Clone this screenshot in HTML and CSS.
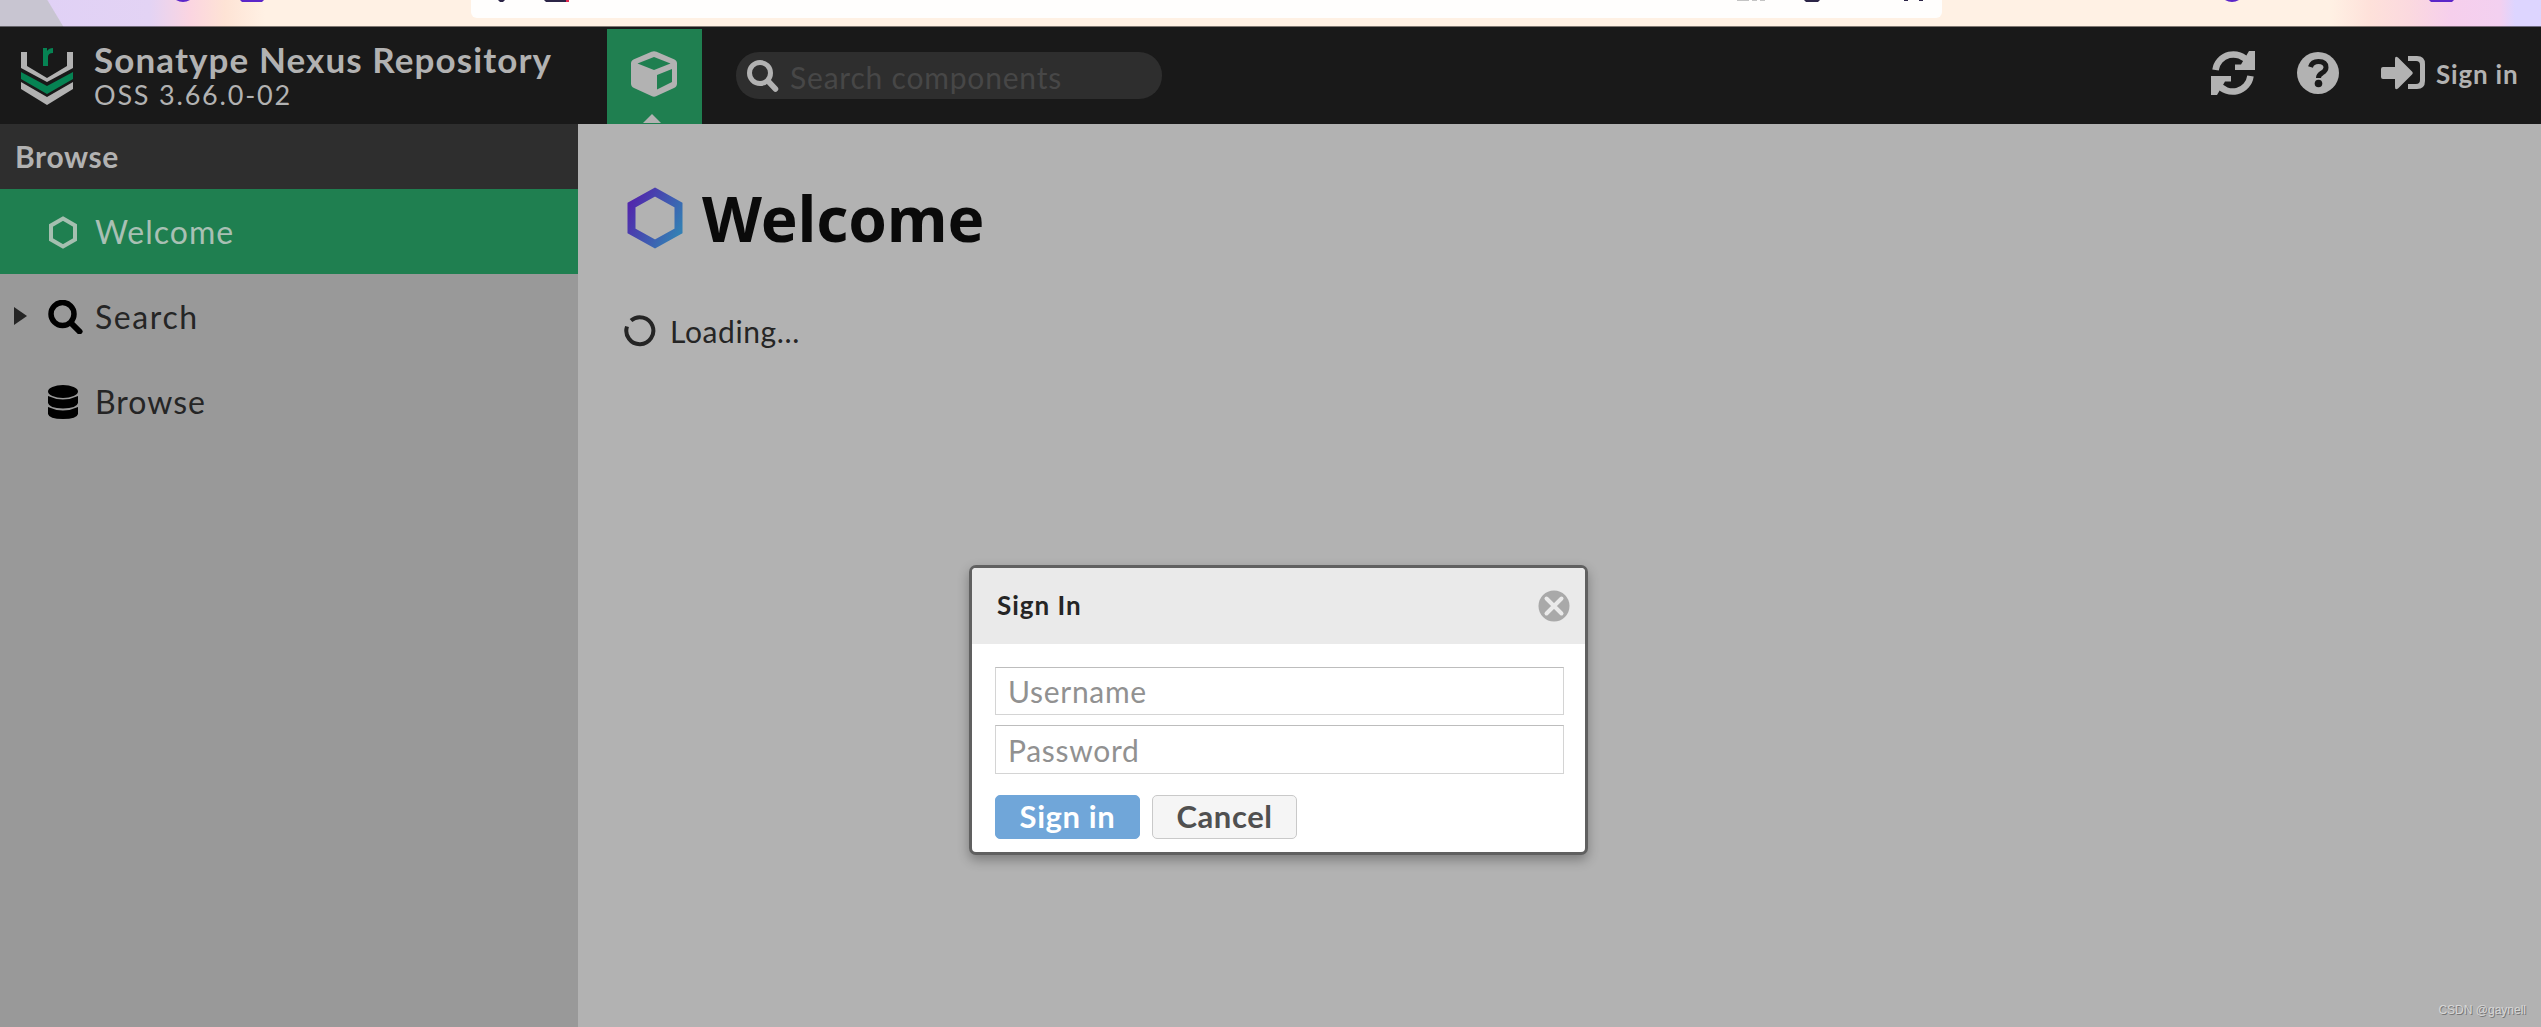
FILE: index.html
```html
<!DOCTYPE html>
<html lang="en">
<head>
    <meta charset="UTF-8">
    <meta name="viewport" content="width=device-width, initial-scale=1.0">
    <title>Sonatype Nexus Repository</title>
    <link rel="stylesheet" href="styles.css">
</head>
<body>
    <!-- browser toolbar -->
    <div class="browser-bar">
        <svg width="2541" height="27" viewBox="0 0 2541 27">
            <path d="M471 0h1471v12a6 6 0 0 1-6 6H477a6 6 0 0 1-6-6z" fill="#fffefd"/>
            <g fill="#5b26c9">
                <path d="M176 0h14q-7 4-14 0zM240 0h24l-2 2h-20zM2225 0h14q-7 4-14 0zM2429 0h25l-2 2h-21z"/>
            </g>
            <g fill="#2c2547">
                <path d="M498 0h7l-2 2h-3zM544 0h22v2h-20zM1804 0h16l-2 2h-12zM1904 0h4v1h-4zM1919 0h4v1h-4z"/>
            </g>
            <path d="M566 0h3v2h-3z" fill="#e22850"/>
            <path d="M1737 0h12v1h-12zM1752 0h5v1h-5zM1760 0h5v1h-5z" fill="#c4c4c4"/>
            <path d="M0 26h2541v1H0z" fill="#000" fill-opacity=".5"/>
        </svg>
    </div>

    <header class="header">
        <svg class="logo" width="52" height="57" viewBox="0 0 52 57">
            <path d="M0 4h6v14l20 12 20-12V4h6v16L26 34 0 20z" fill="#b2b2b2"/>
            <path d="M0 24l26 14 26-14v7L26 46 0 31z" fill="#068353"/>
            <path d="M0 34l26 15 26-15v7L26 57 0 41z" fill="#b2b2b2"/>
            <path d="M22 0h4v3q2-3 6-3v5q-5 0-5 4v9h-5z" fill="#068353"/>
        </svg>
        <div class="brand">
            <div class="brand-name">Sonatype Nexus Repository</div>
            <div class="brand-version">OSS 3.66.0-02</div>
        </div>
        <div class="mode">
            <svg width="46" height="46" viewBox="0 0 46 46">
                <path d="M20.500.8q2.500-1.200 5 0L43 8.300q3 1.200 3 4.200v20q0 3-3 4.500L25.500 45q-2.500 1.500-5 0L3 37q-3-1.500-3-4.500v-20q0-3 3-4.200z" fill="#b2b2b2"/>
                <path d="M6.500 12.500L23 6l16.500 6.500L23 19zM26 24l15-6v13l-15 7.500z" fill="#1f7f50"/>
            </svg>
            <span class="mode-arrow"></span>
        </div>
        <div class="search">
            <svg width="32" height="32" viewBox="0 0 32 32" fill="none" stroke="#b2b2b2">
                <circle cx="13" cy="13" r="10.500" stroke-width="5"/>
                <path d="M21 21l7.500 8" stroke-width="5.500" stroke-linecap="round"/>
            </svg>
            <span>Search components</span>
        </div>
        <div class="actions">
            <svg class="refresh" width="44" height="44" viewBox="0 0 44 44">
                <path d="M4.500 19A18 18 0 0 1 37 11" fill="none" stroke="#b2b2b2" stroke-width="6.500"/>
                <path d="M38 0h6v19H24v-5.500h6z" fill="#b2b2b2"/>
                <path d="M39.500 25A18 18 0 0 1 7 33" fill="none" stroke="#b2b2b2" stroke-width="6.500"/>
                <path d="M6 44H0V25h20v5.500h-6z" fill="#b2b2b2"/>
            </svg>
            <svg class="help" width="42" height="42" viewBox="0 0 42 42">
                <circle cx="21" cy="21" r="21" fill="#b2b2b2"/>
                <path d="M13.500 15q1.500-5.500 8-5.500 7.500 0 7.500 6 0 3-4 5.500-3.500 2-3.500 5" fill="none" stroke="#191919" stroke-width="5"/>
                <circle cx="21.500" cy="31.500" r="3.800" fill="#191919"/>
            </svg>
            <svg class="login" width="44" height="34" viewBox="0 0 44 34">
                <path d="M2 11h12V3q0-3.500 3-1.500l14 14q1.500 1.500 0 3l-14 14q-3 2-3-1.500v-8H2q-2 0-2-2v-8q0-2 2-2z" fill="#b2b2b2"/>
                <path d="M27 0h9q8 0 8 8v17q0 8-8 8h-9v-5h8q4 0 4-4V9q0-4-4-4h-8z" fill="#b2b2b2"/>
            </svg>
            <span class="sign-in-link">Sign in</span>
        </div>
    </header>

    <div class="content">
        <nav class="sidebar">
            <div class="sidebar-title"><span>Browse</span></div>
            <div class="menu-item selected">
                <span class="expander"></span>
                <svg width="35" height="34" viewBox="0 0 35 34">
                    <path d="M15 3.500l12 7v14l-12 7-12-7v-14z" fill="none" stroke="#a5bfb0" stroke-width="4"/>
                </svg>
                <span class="menu-welcome">Welcome</span>
            </div>
            <div class="menu-item">
                <span class="expander arrow"></span>
                <svg width="35" height="34" viewBox="0 0 35 34" fill="none" stroke="#000">
                    <circle cx="14.500" cy="14" r="11.500" stroke-width="5.500"/>
                    <path d="M24 24l7.500 7.500" stroke-width="6" stroke-linecap="round"/>
                </svg>
                <span class="menu-search">Search</span>
            </div>
            <div class="menu-item">
                <span class="expander"></span>
                <svg width="35" height="34" viewBox="0 0 35 34">
                    <ellipse cx="15" cy="6.500" rx="15" ry="6.500"/>
                    <path d="M0 11q15 7 30 0v7q-1 5-15 5.500Q1 23 0 18zM0 22q15 7 30 0v7q-1 5-15 5Q1 34 0 29z"/>
                </svg>
                <span class="menu-browse">Browse</span>
            </div>
        </nav>

        <main class="main">
            <div class="page-title">
                <svg width="56" height="62" viewBox="0 0 56 62">
                    <defs>
                        <linearGradient id="hex" x1="0" y1="0.200" x2="1" y2="0.800">
                            <stop offset="0" stop-color="#5128ac"/>
                            <stop offset="1" stop-color="#337fb4"/>
                        </linearGradient>
                    </defs>
                    <path d="M28 5l23.500 13v26L28 57 4.500 44V18z" fill="none" stroke="url(#hex)" stroke-width="8"/>
                </svg>
                <h1>Welcome</h1>
            </div>
            <div class="loading">
                <svg width="32" height="32" viewBox="0 0 32 32">
                    <path d="M7 5.500A13.500 13.500 0 1 1 3 11.500" fill="none" stroke="#252525" stroke-width="4"/>
                </svg>
                <span>Loading...</span>
            </div>
        </main>
    </div>

    <form class="dialog">
        <div class="dialog-header">
            <span>Sign In</span>
            <svg width="32" height="32" viewBox="0 0 32 32">
                <circle cx="16" cy="16" r="15.500" fill="#a9a9a9"/>
                <path d="M8.500 8.500l15 15M23.500 8.500l-15 15" stroke="#eaeaea" stroke-width="4" stroke-linecap="round"/>
            </svg>
        </div>
        <div class="dialog-body">
            <input class="username" type="text" placeholder="Username">
            <input class="password" type="password" placeholder="Password">
            <div class="buttons">
                <button type="button" class="btn primary">Sign in</button>
                <button type="button" class="btn cancel">Cancel</button>
            </div>
        </div>
    </form>
    <div class="watermark">CSDN @gaynell</div>
</body>
</html>
```
FILE: styles.css
```css
* {
    box-sizing: border-box;
}
body {
    margin: 0;
    height: 1027px;
    display: flex;
    flex-direction: column;
    overflow: hidden;
    font-family: Lato, "Liberation Sans", sans-serif;
    background: #b2b2b2;
    color: #252525;
    white-space: nowrap;
}
svg {
    display: block;
    flex: none;
}
.browser-bar {
    height: 27px;
    flex: none;
    background:
        linear-gradient(59deg, #c8c5d1 54px, transparent 55px),
        linear-gradient(90deg, #dfd0f6 0, #e3d3f4 150px, #fbd5e1 190px, #fee3d5 225px, #fff1e4 265px, #fff1e4 2330px, #fee1da 2370px, #fbd9df 2410px, #f6cfec 2450px, #f3d0f0 2500px, #ddd5ff 2515px);
}
.header {
    height: 97px;
    flex: none;
    display: flex;
    background: #191919;
    color: #b2b2b2;
}
.logo {
    margin: 21px 21px 0;
}
.brand {
    width: 513px;
    padding-top: 11px;
}
.brand-name {
    font-size: 35px;
    font-weight: bold;
    line-height: 42px;
    letter-spacing: 1.1px;
}
.brand-version {
    font-size: 27px;
    line-height: 30px;
    letter-spacing: 1.8px;
}
.mode {
    width: 95px;
    height: 95px;
    margin-top: 2px;
    padding: 22px 0 0 24px;
    background: #1f7f50;
}
.mode-arrow {
    display: block;
    width: 0;
    margin: 17px 0 0 12px;
    border: 9px solid transparent;
    border-top: 0;
    border-bottom-color: #b2b2b2;
}
.search {
    width: 426px;
    height: 47px;
    margin: 25px 0 0 34px;
    padding-left: 11px;
    border-radius: 23px;
    display: flex;
    align-items: center;
    background: #2e2e2e;
    color: #474747;
    font-size: 30px;
    letter-spacing: 0.8px;
}
.search span {
    margin: 2px 0 0 11px;
}
.actions {
    margin-left: auto;
    padding: 24px 22px 0 0;
    display: flex;
    align-items: flex-start;
}
.help {
    margin: 1px 42px 0;
}
.login {
    margin: 5px 11px 0 0;
}
.sign-in-link {
    width: 83px;
    margin-top: 7px;
    font-size: 26px;
    font-weight: bold;
    line-height: 32px;
    letter-spacing: 0.8px;
}
.content {
    flex: 1;
    display: flex;
}
.sidebar {
    width: 578px;
    background: #999;
}
.sidebar-title {
    height: 65px;
    padding: 0 15px;
    background: #2e2e2e;
    color: #b2b2b2;
    font-size: 30px;
    font-weight: bold;
    line-height: 65px;
    letter-spacing: 0.6px;
}
.menu-item {
    height: 85px;
    display: flex;
    align-items: center;
    font-size: 32px;
    letter-spacing: 1px;
}
.menu-item svg {
    margin-right: 12px;
}
.menu-item span {
    margin-bottom: 1px;
}
.menu-item .menu-search {
    letter-spacing: 1.6px;
}
.menu-item.selected {
    background: #1f7f50;
    color: #a9c0b4;
}
.expander {
    width: 34px;
    margin-left: 14px;
}
.expander.arrow {
    width: 13px;
    margin-right: 21px;
    border: 9px solid transparent;
    border-width: 9px 0 9px 13px;
    border-left-color: #252525;
}
.main {
    flex: 1;
    padding: 52px 46px;
}
.page-title {
    height: 80px;
    display: flex;
    align-items: center;
}
.page-title svg {
    margin: 3px 19px 0 3px;
}
h1 {
    margin: 3px 0 0;
    font: bold 62px "Noto Sans", sans-serif;
    color: #0a0a0a;
}
.loading {
    height: 40px;
    margin-top: 55px;
    display: flex;
    align-items: center;
    font-size: 30px;
    letter-spacing: 0.6px;
}
.loading svg {
    margin-right: 14px;
}
/* modal over the page */
.dialog {
    position: absolute;
    left: 969px;
    top: 565px;
    width: 619px;
    height: 290px;
    border: 3px solid #606060;
    border-radius: 7px;
    background: #fff;
    box-shadow: 0 5px 12px rgba(0, 0, 0, 0.3);
    overflow: hidden;
}
.dialog-header {
    height: 76px;
    padding: 0 15px 0 25px;
    display: flex;
    align-items: center;
    justify-content: space-between;
    background: #eaeaea;
    font-size: 26px;
    font-weight: bold;
    letter-spacing: 1px;
}
.dialog-header span {
    margin-bottom: 2px;
}
.dialog-body {
    padding: 23px 21px 0 23px;
}
.dialog input {
    display: block;
    width: 100%;
    height: 48px;
    margin: 0 0 10px;
    padding: 0 12px;
    border: 1px solid #d4d4d4;
    border-top-color: #bdbdbd;
    font-family: inherit;
    font-size: 30px;
    letter-spacing: 0.7px;
}
.dialog input.password {
    height: 49px;
}
.dialog input::placeholder {
    color: #919191;
}
.buttons {
    display: flex;
    gap: 12px;
    margin-top: 21px;
}
.btn {
    width: 145px;
    height: 44px;
    padding: 0 0 3px;
    border: 1px solid #c9c9c9;
    border-radius: 5px;
    background: #f5f5f5;
    color: #505050;
    font-family: inherit;
    font-size: 31px;
    font-weight: bold;
    letter-spacing: 0.6px;
}
.btn.primary {
    border-color: #70a6d9;
    background: #70a6d9;
    color: #fff;
}
.watermark {
    position: absolute;
    right: 15px;
    bottom: 10px;
    font: 12px "Liberation Sans", sans-serif;
    color: #d6d6d6;
    text-shadow: 1px 1px 0 #777;
}
```
